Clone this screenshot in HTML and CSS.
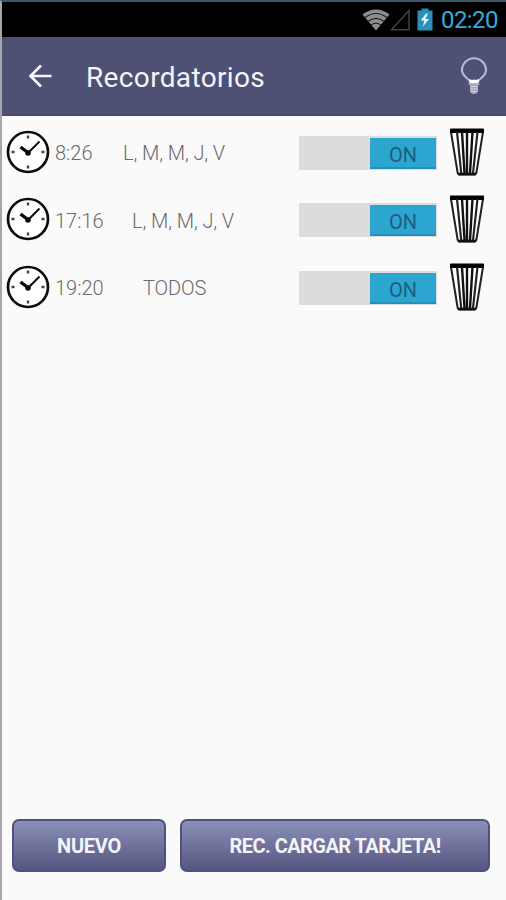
FILE: index.html
```html
<!DOCTYPE html>
<html lang="es">

<head>
    <meta charset="UTF-8">
    <meta name="viewport" content="width=device-width, initial-scale=1.0">
    <title>Recordatorios</title>
    <link rel="stylesheet" href="styles.css">
</head>

<body>
    <!-- Iconos compartidos -->
    <svg class="symbols">
        <symbol id="clock" viewBox="0 0 44 44">
            <circle cx="22" cy="22" r="20" fill="#fff" stroke="#0b0b0b" stroke-width="2.7" />
            <path d="M22 5.5v3M22 35.5v3M5.5 22h3M35.5 22h3" stroke="#444" stroke-width="2.4" />
            <path d="M14.5 17l8 6" stroke="#0b0b0b" stroke-width="3.4" />
            <path d="M20.5 24.5L33.500 11.5" stroke="#0b0b0b" stroke-width="2" />
            <circle cx="22" cy="23" r="2.8" fill="#0b0b0b" />
        </symbol>
        <symbol id="trash" viewBox="0 0 36 48">
            <path d="M2 4l6.5 40q.4 2.500 2.500 2.500h14q2.100 0 2.500-2.500L34 4z" fill="#fff" stroke="#222" stroke-width="2" />
            <path d="M1 1.500q0-1 1-1h32q1 0 1 1v3.500H1z" fill="#000" />
            <path d="M8 4l4.200 41M28.500 4L24 45" stroke="#222" stroke-width="2.200" fill="none" />
            <path d="M13 4l2.500 41M18 4v41M23.500 4L21 45" stroke="#111" stroke-width="2.400" fill="none" />
            <path d="M9.5 46h17" stroke="#111" stroke-width="2.600" />
        </symbol>
    </svg>

    <div class="status-bar">
        <svg class="wifi" width="28" height="22" viewBox="0 0 28 22">
            <path d="M0.5 5.5Q14-4.5 27.5 5.5L14 21.5z" fill="#8e8e8e" />
            <path d="M2.5 9Q14 0 25.5 9M5.5 12.8Q14 6 22.5 12.8M8.5 16.4Q14 12 19.5 16.4" fill="none" stroke="#1c1c1c" stroke-width="1.1" />
        </svg>
        <svg class="signal" width="20" height="22" viewBox="0 0 20 22">
            <path d="M1.5 20.8H19V1.5z" fill="none" stroke="#424242" stroke-width="1.5" />
        </svg>
        <svg class="battery" width="16" height="23" viewBox="0 0 16 23">
            <path d="M0.5 2.5h4V0.5h7v2h4v20h-15z" fill="#2b91b8" />
            <path d="M9 5.5L3.8 12.5h3.4L6 18.5l6-7.5H8.5L11 5.5z" fill="#e4f6fc" />
        </svg>
        <span class="time">02:20</span>
    </div>

    <div class="header">
        <svg class="back" width="24" height="24" viewBox="0 0 24 24">
            <path d="M23.5 12H3M13 1.5L2.5 12 13 22.5" fill="none" stroke="#f4f4fa" stroke-width="2.7" />
        </svg>
        <h1>Recordatorios</h1>
        <svg class="bulb" width="28" height="40" viewBox="0 0 28 40">
            <path d="M9.5 25C9 22.5 2 20.5 2 14.300a12 12 0 0 1 24 0C26 20.5 19 22.5 18.5 25z" fill="none" stroke="#b9bad3" stroke-width="2.100" />
            <path d="M9.5 23l2.500 1 2-.5 2 .5 2.500-1v4.500h-9z" fill="#fff" />
            <path d="M8.5 28h11" stroke="#b9bad3" stroke-width="1.6" />
            <path d="M10 28.5h8V36l-2.500 2h-3L10 36z" fill="#a3a4bd" />
            <path d="M10 30.5h8M10 33h8M11 35.5h6" stroke="#d3d4e2" stroke-width="1.2" />
        </svg>
    </div>

    <div class="list">
        <div class="row">
            <svg class="clock"><use href="#clock" /></svg>
            <span class="hour">8:26</span>
            <span class="days short">L, M, M, J, V</span>
            <div class="switch"><div class="thumb">ON</div></div>
            <svg class="trash"><use href="#trash" /></svg>
        </div>
        <div class="row">
            <svg class="clock"><use href="#clock" /></svg>
            <span class="hour">17:16</span>
            <span class="days">L, M, M, J, V</span>
            <div class="switch"><div class="thumb">ON</div></div>
            <svg class="trash"><use href="#trash" /></svg>
        </div>
        <div class="row">
            <svg class="clock"><use href="#clock" /></svg>
            <span class="hour">19:20</span>
            <span class="days all">TODOS</span>
            <div class="switch"><div class="thumb">ON</div></div>
            <svg class="trash"><use href="#trash" /></svg>
        </div>
    </div>

    <div class="actions">
        <button class="new">NUEVO</button>
        <button class="card">REC. CARGAR TARJETA!</button>
    </div>
</body>

</html>
```
FILE: styles.css
```css
* {
    box-sizing: border-box;
}

body {
    margin: 0;
    height: 900px;
    display: flex;
    flex-direction: column;
    border-top: 2px solid #405664;
    border-left: 2px solid #a5a5aa;
    background-color: #fafafa;
    font-family: Roboto, sans-serif;
    overflow: hidden;
}

svg {
    display: block;
    flex: none;
}

.symbols {
    position: absolute;
    width: 0;
    height: 0;
}

.status-bar {
    height: 35px;
    flex: none;
    display: flex;
    justify-content: flex-end;
    align-items: center;
    padding-right: 7px;
    background-color: #000;
}

.signal {
    margin-right: 7px;
}

.battery {
    margin-right: 8px;
}

.time {
    color: #35acd6;
    font-size: 24px;
    letter-spacing: -0.6px;
    line-height: 35px;
    width: 58px;
    padding-top: 1px;
    white-space: nowrap;
}

.header {
    height: 79px;
    flex: none;
    display: flex;
    align-items: center;
    padding: 0 18px 0 26px;
    background-color: #4e5074;
    border-bottom: 2px solid #484970;
}

h1 {
    flex: 1;
    margin: 0 0 0 34px;
    padding-top: 4px;
    color: #f4f4fa;
    font-size: 28px;
    font-weight: 400;
    line-height: 40px;
    letter-spacing: 0.35px;
}

.list {
    flex: 1;
    padding-top: 2px;
}

.row {
    height: 67.5px;
    display: flex;
    align-items: center;
    padding-left: 4px;
    color: #6a6a6a;
    font-size: 20px;
    font-weight: 300;
    line-height: 24px;
    white-space: nowrap;
}

.clock {
    width: 44px;
    height: 44px;
}

.hour {
    width: 50px;
    margin: 3px 0 0 5px;
}

.days {
    margin: 3px 0 0 27px;
    letter-spacing: -0.1px;
}

.days.short {
    margin-left: 18px;
}

.days.all {
    margin-left: 38px;
}

.switch {
    width: 138px;
    height: 34px;
    margin: 2px 12px 0 auto;
    padding: 2px 1px 1px 71px;
    background-color: #dcdcdc;
}

.thumb {
    height: 31px;
    background-color: #2ca6d0;
    border-bottom: 2px solid #2391ba;
    color: #1b5f7b;
    font-weight: 400;
    line-height: 34px;
    text-align: center;
}

.trash {
    width: 36px;
    height: 48px;
    margin-right: 21px;
}

.actions {
    flex: none;
    display: flex;
    gap: 14px;
    padding: 0 16px 28px 10px;
}

button {
    height: 53px;
    padding: 1px 0 0;
    border: 2px solid #50517c;
    border-radius: 7px;
    background: linear-gradient(#8b8fb6, #555681);
    color: #f4f4fb;
    font-family: inherit;
    font-size: 20px;
    font-weight: 700;
    letter-spacing: -0.3px;
}

.new {
    width: 154px;
}

.card {
    flex: 1;
    letter-spacing: -0.55px;
}
```
